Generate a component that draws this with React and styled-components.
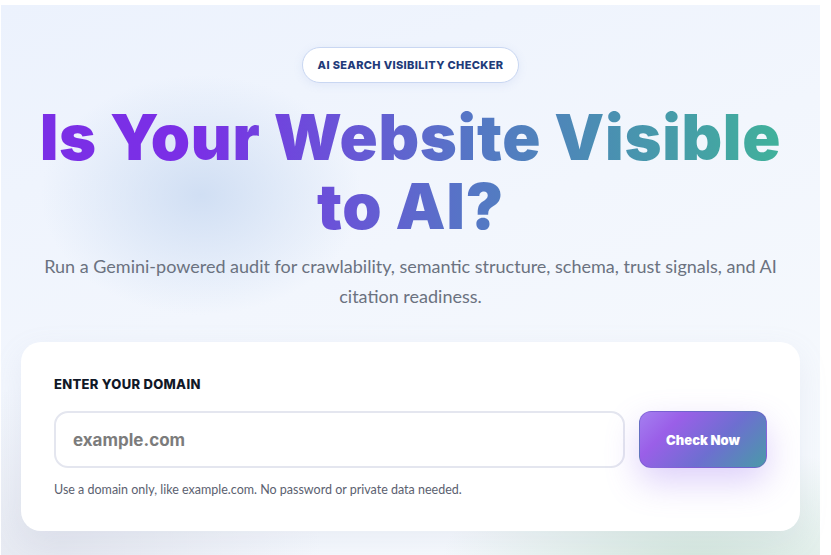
import React from 'react';
import styled, { createGlobalStyle } from 'styled-components';

const GlobalStyle = createGlobalStyle`
  html, body {
    margin: 0;
    padding: 0;
    background: #ffffff;
  }
  * {
    box-sizing: border-box;
  }
`;

const Page = styled.div`
  width: 831px;
  height: 555px;
  overflow: hidden;
  padding: 5px 11px 0 1px;
`;

const Hero = styled.section`
  height: 560px;
  display: flex;
  flex-direction: column;
  align-items: center;
  padding: 42px 20px 0;
  background:
    radial-gradient(ellipse 160px 120px at 200px 190px, rgba(203, 219, 242, 0.85), rgba(203, 219, 242, 0) 100%),
    radial-gradient(ellipse 260px 120px at 700px 560px, rgba(206, 228, 216, 0.9), rgba(206, 228, 216, 0) 100%),
    radial-gradient(ellipse 260px 160px at 60px 540px, rgba(226, 229, 238, 0.9), rgba(226, 229, 238, 0) 100%),
    linear-gradient(160deg, #ecf2fd 0%, #f2f6fd 45%, #f7fafd 100%);
  font-family: "Open Sans", "Liberation Sans", sans-serif;
`;

const Badge = styled.div`
  height: 36px;
  padding: 0 15px;
  display: flex;
  align-items: center;
  border: 1px solid #c9d7f2;
  border-radius: 999px;
  background: #ffffff;
  box-shadow: 0 2px 10px rgba(120, 150, 210, 0.12);
  color: #1f3b7a;
  font-family: "Inter", "Liberation Sans", sans-serif;
  font-weight: 800;
  font-size: 11px;
  letter-spacing: 0.35px;
  text-transform: uppercase;
`;

const Title = styled.h1`
  margin: 20px 0 0;
  width: 780px;
  text-align: center;
  font-family: "Inter", "Liberation Sans", sans-serif;
  font-weight: 900;
  font-size: 63px;
  line-height: 69px;
  letter-spacing: 0.7px;
  background: linear-gradient(90deg, #7b2fe6 0%, #7a2fe6 22%, #6a52d8 40%, #5577c5 58%, #4a8fb2 75%, #3fb598 100%);
  -webkit-background-clip: text;
  background-clip: text;
  color: transparent;
`;

const Subtitle = styled.p`
  margin: 10px 0 0;
  width: 760px;
  text-align: center;
  color: #6b7280;
  font-family: "Lato", "Liberation Sans", sans-serif;
  font-size: 18px;
  line-height: 30px;
`;

const Card = styled.div`
  margin-top: 31px;
  width: 779px;
  align-self: flex-start;
  background: #ffffff;
  border-radius: 20px;
  padding: 34px 33px 34px;
  box-shadow: 0 10px 30px rgba(150, 160, 190, 0.12);
`;

const Label = styled.label`
  display: block;
  color: #111827;
  font-family: "Inter", "Liberation Sans", sans-serif;
  font-weight: 800;
  font-size: 13px;
  letter-spacing: 0.3px;
  text-transform: uppercase;
`;

const Row = styled.div`
  margin-top: 19px;
  display: flex;
  gap: 14px;
`;

const Input = styled.input`
  flex: 1;
  height: 57px;
  border: 2px solid #e4e6ef;
  border-radius: 14px;
  padding: 0 17px;
  background: #ffffff;
  font-family: "Inter", "Liberation Sans", sans-serif;
  font-weight: 700;
  font-size: 17px;
  color: #111827;
  outline: none;
  &::placeholder {
    color: #7c7c7c;
  }
`;

const Button = styled.button`
  width: 128px;
  height: 57px;
  border: 1px solid rgba(110, 90, 200, 0.5);
  border-radius: 12px;
  background: linear-gradient(135deg, #a47ff0 0%, #9a5fe8 25%, #6d6fd0 60%, #4a9aa8 100%);
  color: #ffffff;
  font-family: "Inter", "Liberation Sans", sans-serif;
  font-weight: 900;
  font-size: 13px;
  box-shadow: 0 14px 34px rgba(150, 110, 240, 0.32);
  cursor: pointer;
`;

const Hint = styled.p`
  margin: 14px 0 0;
  color: #5b6170;
  font-family: "Lato", "Liberation Sans", sans-serif;
  font-size: 12.5px;
`;

export default function App() {
  return (
    <Page>
      <GlobalStyle />
      <Hero>
        <Badge>AI Search Visibility Checker</Badge>
        <Title>Is Your Website Visible to AI?</Title>
        <Subtitle>
          Run a Gemini-powered audit for crawlability, semantic structure, schema, trust signals, and AI citation readiness.
        </Subtitle>
        <Card>
          <Label htmlFor="domain">Enter your domain</Label>
          <Row>
            <Input id="domain" placeholder="example.com" />
            <Button>Check Now</Button>
          </Row>
          <Hint>Use a domain only, like example.com. No password or private data needed.</Hint>
        </Card>
      </Hero>
    </Page>
  );
}
